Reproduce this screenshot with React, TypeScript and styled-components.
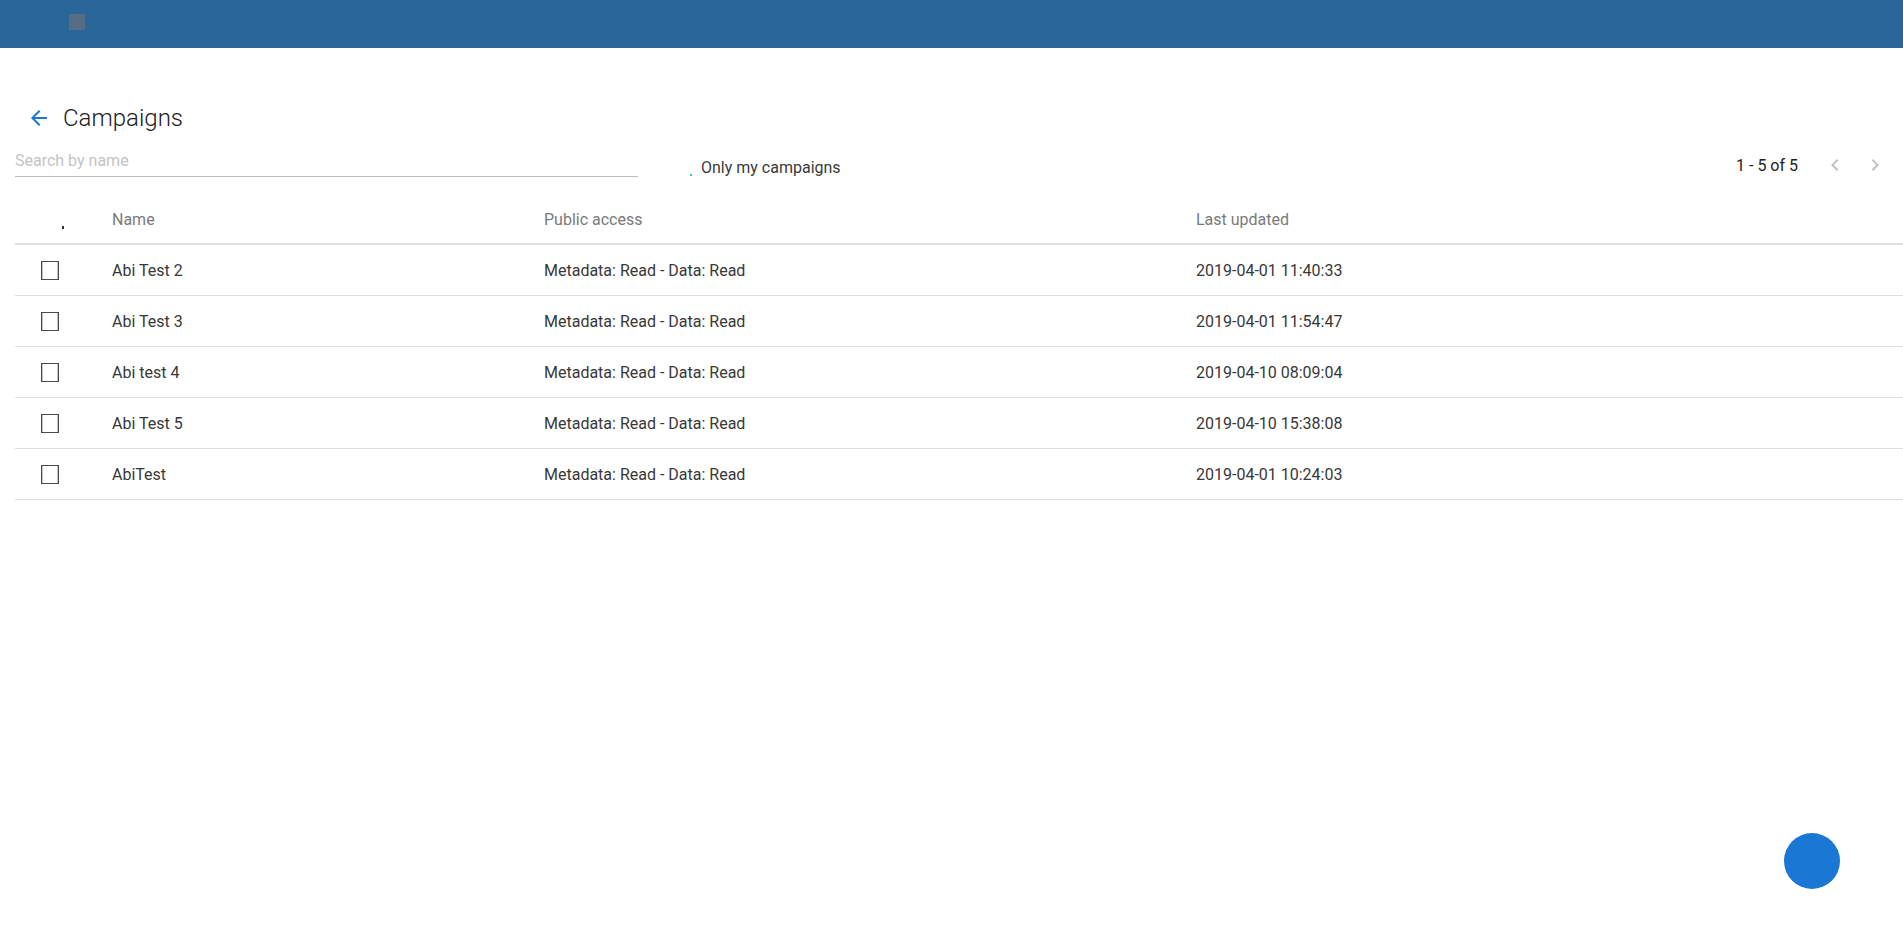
import React from "react";
import styled, { createGlobalStyle } from "styled-components";

const GlobalStyle = createGlobalStyle`
  html, body {
    margin: 0;
    padding: 0;
    background: #ffffff;
    font-family: Roboto, "Liberation Sans", Arial, sans-serif;
    overflow: hidden;
  }
  * { box-sizing: border-box; }
`;

const TopBar = styled.header`
  height: 48px;
  background: #29679a;
  display: flex;
  align-items: flex-start;
  padding: 14px 0 0 69px;
`;

const MenuSquare = styled.span`
  width: 16px;
  height: 16px;
  background: #586d83;
`;

const Main = styled.main`
  padding-left: 15px;
`;

const TitleRow = styled.div`
  height: 40px;
  margin-top: 50px;
  display: flex;
  align-items: center;
`;

const BackButton = styled.button`
  width: 24px;
  height: 24px;
  margin-left: 12px;
  padding: 0;
  border: 0;
  background: transparent;
  display: flex;
  cursor: pointer;
`;

const Title = styled.h1`
  margin: 0 0 0 12px;
  font-size: 24px;
  font-weight: 300;
  color: #212121;
  line-height: 40px;
`;

const Toolbar = styled.div`
  height: 56px;
  display: flex;
  align-items: center;
`;

const SearchInput = styled.input`
  width: 623px;
  height: 31px;
  margin-bottom: 10px;
  padding: 0;
  border: 0;
  border-bottom: 1px solid #bdbdbd;
  outline: none;
  font-family: inherit;
  font-size: 16px;
  color: #212121;
  background: transparent;
  &::placeholder {
    color: #c4c4c4;
  }
`;

const FilterLabel = styled.label`
  display: flex;
  align-items: center;
  margin: 2px 0 0 52px;
  font-size: 16px;
  color: #3a3a3a;
`;

const TinyMark = styled.span<{ $color: string; $w: number; $h: number; $dy: number }>`
  display: inline-block;
  width: ${(p) => p.$w}px;
  height: ${(p) => p.$h}px;
  background: ${(p) => p.$color};
  transform: translateY(${(p) => p.$dy}px);
`;

const FilterText = styled.span`
  margin-left: 9px;
`;

const Pagination = styled.div`
  margin: 0 0 2px auto;
  display: flex;
  align-items: center;
  padding-right: 8px;
`;

const PageInfo = styled.span`
  font-size: 16px;
  color: #212121;
  margin-right: 17px;
`;

const PageButton = styled.button`
  width: 40px;
  height: 40px;
  padding: 0;
  border: 0;
  background: transparent;
  display: flex;
  align-items: center;
  justify-content: center;
`;

const Table = styled.div`
  width: 100%;
`;

const Row = styled.div<{ $head?: boolean }>`
  display: grid;
  grid-template-columns: 97px 432px 652px 1fr;
  align-items: center;
  height: 51px;
  padding-top: ${(p) => (p.$head ? 2 : 0)}px;
  border-bottom: ${(p) => (p.$head ? "2px solid #e0e0e0" : "1px solid #e0e0e0")};
`;

const HeadCell = styled.div`
  font-size: 16px;
  color: #7a7a7a;
  white-space: nowrap;
`;

const Cell = styled.div`
  font-size: 16px;
  color: #383838;
  white-space: nowrap;
`;

const CheckCell = styled.div<{ $head?: boolean }>`
  display: flex;
  align-items: center;
  padding-left: ${(p) => (p.$head ? 47 : 26)}px;
`;

const CheckBox = styled.span`
  width: 18px;
  height: 19px;
  border: 1px solid #4a4a4a;
  box-shadow: inset 0.5px 0 0 #8a8a8a, inset -0.5px 0 0 #8a8a8a;
  background: #fff;
`;

const Fab = styled.button`
  position: fixed;
  right: 63px;
  bottom: 48px;
  width: 56px;
  height: 56px;
  border-radius: 50%;
  border: 0;
  background: #1a78d4;
  padding: 0;
`;

const rows = [
  { name: "Abi Test 2", access: "Metadata: Read - Data: Read", updated: "2019-04-01 11:40:33" },
  { name: "Abi Test 3", access: "Metadata: Read - Data: Read", updated: "2019-04-01 11:54:47" },
  { name: "Abi test 4", access: "Metadata: Read - Data: Read", updated: "2019-04-10 08:09:04" },
  { name: "Abi Test 5", access: "Metadata: Read - Data: Read", updated: "2019-04-10 15:38:08" },
  { name: "AbiTest", access: "Metadata: Read - Data: Read", updated: "2019-04-01 10:24:03" },
];

const Chevron = ({ dir }: { dir: "left" | "right" }) => (
  <svg width="24" height="24" viewBox="0 0 24 24">
    <path
      fill="#c2c2c2"
      d={
        dir === "left"
          ? "M15.41 7.41 14 6l-6 6 6 6 1.41-1.41L10.83 12z"
          : "M10 6 8.59 7.41 13.17 12l-4.58 4.59L10 18l6-6z"
      }
    />
  </svg>
);

export default function App() {
  return (
    <>
      <GlobalStyle />
      <TopBar>
        <MenuSquare />
      </TopBar>
      <Main>
        <TitleRow>
          <BackButton aria-label="Back">
            <svg width="24" height="24" viewBox="0 0 24 24">
              <path fill="#1976d2" d="M20 11H7.83l5.59-5.59L12 4l-8 8 8 8 1.41-1.41L7.83 13H20v-2z" />
            </svg>
          </BackButton>
          <Title>Campaigns</Title>
        </TitleRow>
        <Toolbar>
          <SearchInput placeholder="Search by name" />
          <FilterLabel>
            <TinyMark $color="#26c6da" $w={2} $h={2} $dy={8} />
            <FilterText>Only my campaigns</FilterText>
          </FilterLabel>
          <Pagination>
            <PageInfo>1 - 5 of 5</PageInfo>
            <PageButton aria-label="Previous page">
              <Chevron dir="left" />
            </PageButton>
            <PageButton aria-label="Next page">
              <Chevron dir="right" />
            </PageButton>
          </Pagination>
        </Toolbar>
        <Table>
          <Row $head>
            <CheckCell $head>
              <TinyMark $color="#333333" $w={2} $h={3} $dy={8} />
            </CheckCell>
            <HeadCell>Name</HeadCell>
            <HeadCell>Public access</HeadCell>
            <HeadCell>Last updated</HeadCell>
          </Row>
          {rows.map((r) => (
            <Row key={r.name}>
              <CheckCell>
                <CheckBox />
              </CheckCell>
              <Cell>{r.name}</Cell>
              <Cell>{r.access}</Cell>
              <Cell>{r.updated}</Cell>
            </Row>
          ))}
        </Table>
      </Main>
      <Fab aria-label="Add" />
    </>
  );
}
